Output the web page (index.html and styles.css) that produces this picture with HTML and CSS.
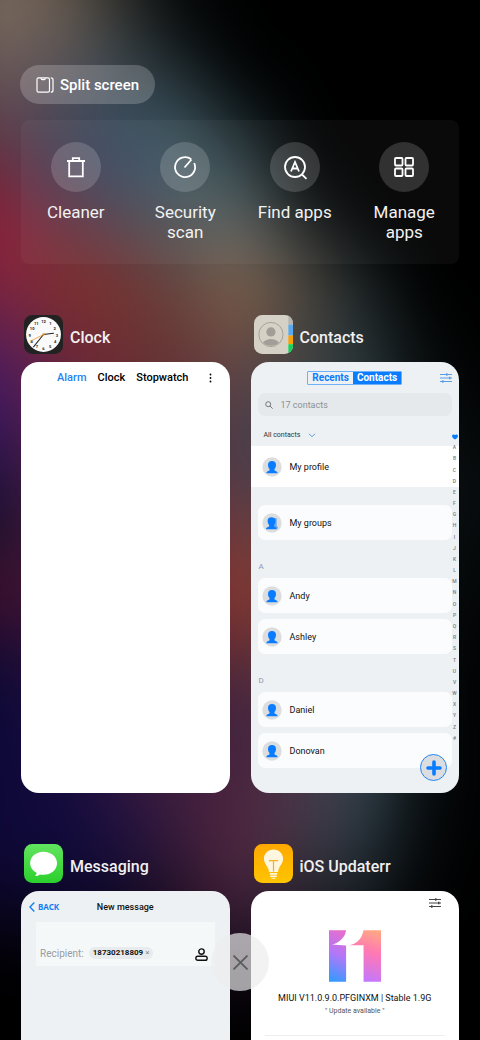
FILE: index.html
```html
<!DOCTYPE html>
<html lang="en">
<head>
<meta charset="utf-8">
<meta name="viewport" content="width=device-width, initial-scale=1">
<title>Recent apps</title>
<link rel="stylesheet" href="styles.css">
</head>
<body>
<svg class="defs" aria-hidden="true">
  <symbol id="person" viewBox="0 0 20 20">
    <circle cx="10" cy="10" r="9.7" fill="#dcdddf"/>
    <path d="M10 4c2.600 0 4 1.400 4 3.700 0 1.900-.6 3.300-1.500 4.200v1.300c.3 1 3.100.8 3.100 3.100H4.400c0-2.300 2.800-2.100 3.100-3.100v-1.300C6.600 11 6 9.600 6 7.700 6 5.400 7.400 4 10 4z" fill="#0a7cff"/>
  </symbol>
  <symbol id="people" viewBox="0 0 20 20">
    <circle cx="10" cy="10" r="9.7" fill="#dcdddf"/>
    <path d="M11 5h3.700v7c0 1.500 1.300 1.500 1.300 3.500h-5z" fill="#6aa9ee"/>
    <path d="M9.500 4.300c2.600 0 4 1.300 4 3.500 0 1.900-.6 3.300-1.500 4.200v1.200c.3 1 2.900.8 2.900 3.100H4c0-2.300 2.800-2.100 3.100-3.100V12c-.9-.9-1.500-2.300-1.500-4.200 0-2.200 1.300-3.500 3.900-3.500z" fill="#0a7cff"/>
  </symbol>
  <symbol id="sliders" viewBox="0 0 12 10">
    <path d="M0 1.500h12M0 5h12M0 8.500h12" fill="none" stroke="currentColor" stroke-width="1"/>
    <path d="M6 .3h1.500v2.400H6zM9 3.800h1.500v2.400H9zM2 7.300h1.500v2.400H2z" fill="currentColor"/>
  </symbol>
</svg>
<div class="screen">
  <div class="wallpaper" aria-hidden="true">
    <i class="band band-1"></i><i class="band band-2"></i><i class="band band-3"></i>
    <i class="band band-4"></i><i class="band band-5"></i><i class="band band-6"></i>
    <i class="band band-7"></i><i class="band band-8"></i><i class="band band-9"></i>
  </div>

  <main class="content">
    <button class="split" type="button">
      <svg class="split-icon" viewBox="0 0 18 16" fill="none" stroke="currentColor" stroke-width="1.200">
        <rect x="1" y=".8" width="12.500" height="14.400" rx="1.600"/>
        <path d="M5 1.200c.2 1.200.6 1.400 1.200 1.400h2c.7 0 1-.2 1.200-1.400M14.800.8c1.500 0 2.200.6 2.200 2v10.400c0 1.400-.7 2-2.200 2"/>
      </svg>
      Split screen
    </button>

    <nav class="tools">
      <button class="tool" type="button">
        <span class="tool-disc"><svg class="tool-icon" viewBox="0 0 24 24"><path d="M3 6h18M5.200 6v15.300h13.600V6M8.800 6V3.200h6.400V6"/></svg></span>
        Cleaner
      </button>
      <button class="tool" type="button">
        <span class="tool-disc"><svg class="tool-icon" viewBox="0 0 24 24"><path d="M18.200 4.200A10 10 0 1 0 21.200 8M11.500 12.500l7-8"/></svg></span>
        Security scan
      </button>
      <button class="tool" type="button">
        <span class="tool-disc"><svg class="tool-icon" viewBox="0 0 24 24"><circle cx="12" cy="12" r="10"/><path d="M19 19.500l4.500 4.300M8 16.500l4-9.500 4 9.500M9.500 13.500h5"/></svg></span>
        Find apps
      </button>
      <button class="tool" type="button">
        <span class="tool-disc"><svg class="tool-icon" viewBox="0 0 24 24"><rect x="3" y="3" width="7.500" height="7.500" rx="1"/><rect x="13.500" y="3" width="7.500" height="7.500" rx="1"/><rect x="3" y="13.500" width="7.500" height="7.500" rx="1"/><rect x="13.500" y="13.500" width="7.500" height="7.500" rx="1"/></svg></span>
        Manage apps
      </button>
    </nav>

    <div class="tasks">
      <section class="task">
        <h2 class="task-title">
          <svg class="app-icon" viewBox="0 0 38 38">
            <rect width="38" height="38" rx="8" fill="#222"/>
            <circle cx="19" cy="19" r="17" fill="#fafafa"/>
            <g class="dial"><text x="19" y="8">12</text><text x="25.800" y="10">1</text><text x="30" y="15">2</text><text x="32.200" y="21">3</text><text x="30.500" y="27.500">4</text><text x="25.500" y="32">5</text><text x="19" y="34.500">6</text><text x="12.500" y="32">7</text><text x="7.500" y="27.500">8</text><text x="5.600" y="21">9</text><text x="8" y="15">10</text><text x="12" y="10">11</text></g>
            <path d="M19 19l9.700-1.300M19 19L9.300 31" stroke="#222" stroke-width="1" stroke-linecap="round"/>
            <path d="M21 18L6 25.700" stroke="#f39a2d" stroke-width=".8"/>
            <circle cx="19" cy="19" r="1.100" fill="#e08a20"/>
          </svg>
          <span class="task-name">Clock</span>
        </h2>
        <article class="card clock">
          <header class="clock-bar">
            <button class="clock-tab active" type="button">Alarm</button>
            <button class="clock-tab" type="button">Clock</button>
            <button class="clock-tab" type="button">Stopwatch</button>
            <button class="more" type="button" aria-label="More"><svg class="more-icon" viewBox="0 0 3 10"><circle cx="1.500" cy="1.500" r=".9"/><circle cx="1.500" cy="5" r=".9"/><circle cx="1.500" cy="8.500" r=".9"/></svg></button>
          </header>
        </article>
      </section>

      <section class="task">
        <h2 class="task-title">
          <svg class="app-icon" viewBox="0 0 38 38">
            <defs><clipPath id="tile"><rect width="38" height="38" rx="8"/></clipPath><clipPath id="face"><circle cx="16.500" cy="19" r="11"/></clipPath></defs>
            <g clip-path="url(#tile)">
              <rect width="38" height="38" fill="#d6d1c6"/>
              <path d="M33.500 0H38v9.500h-4.500z" fill="#b5b5b0"/><path d="M33.500 9.500H38v10.500h-4.500z" fill="#58aaf0"/><path d="M33.500 20H38v8.500h-4.500z" fill="#f9a208"/><path d="M33.500 28.500H38V38h-4.500z" fill="#12d65c"/>
              <g clip-path="url(#face)"><circle cx="16.500" cy="16.500" r="4.500" fill="#a39d97"/><ellipse cx="16.500" cy="29" rx="8.500" ry="5.500" fill="#a39d97"/></g>
              <circle cx="16.500" cy="19" r="11.800" fill="none" stroke="#a39d97" stroke-width=".9"/>
            </g>
          </svg>
          <span class="task-name">Contacts</span>
        </h2>
        <article class="card contacts">
          <header class="contacts-bar">
            <div class="segments"><button class="segment" type="button">Recents</button><button class="segment on" type="button">Contacts</button></div>
            <button class="filter" type="button" aria-label="Filter"><svg class="sliders"><use href="#sliders"/></svg></button>
          </header>
          <label class="search">
            <svg class="search-icon" viewBox="0 0 8 8" fill="none" stroke="currentColor"><circle cx="3.200" cy="3.200" r="2.500"/><path d="M5 5l2.600 2.600"/></svg>
            <input class="search-input" type="text" placeholder="17 contacts" aria-label="Search contacts">
          </label>
          <button class="group-picker" type="button">All contacts <svg class="chevron" viewBox="0 0 8 5" fill="none" stroke="currentColor"><path d="M1 .8l3 3 3-3"/></svg></button>
          <a class="row profile" href="#profile"><svg class="avatar"><use href="#person"/></svg>My profile</a>
          <a class="row" href="#groups"><svg class="avatar"><use href="#people"/></svg>My groups</a>
          <h3 class="initial">A</h3>
          <div class="rows">
            <a class="row" href="#andy"><svg class="avatar"><use href="#person"/></svg>Andy</a>
            <a class="row" href="#ashley"><svg class="avatar"><use href="#person"/></svg>Ashley</a>
          </div>
          <h3 class="initial">D</h3>
          <div class="rows">
            <a class="row" href="#daniel"><svg class="avatar"><use href="#person"/></svg>Daniel</a>
            <a class="row" href="#donovan"><svg class="avatar"><use href="#person"/></svg>Donovan</a>
          </div>
          <div class="index">
            <span class="mark"><svg class="heart" viewBox="0 0 6 6"><path d="M3 5.600C1.500 4.500 0 3.600 0 2 0 .4 2 0 3 1 4 0 6 .4 6 2c0 1.600-1.500 2.500-3 3.600z"/></svg></span>
            <span class="mark">A</span><span class="mark">B</span><span class="mark">C</span><span class="mark">D</span><span class="mark">E</span><span class="mark">F</span><span class="mark">G</span><span class="mark">H</span><span class="mark">I</span><span class="mark">J</span><span class="mark">K</span><span class="mark">L</span><span class="mark">M</span><span class="mark">N</span><span class="mark">O</span><span class="mark">P</span><span class="mark">Q</span><span class="mark">R</span><span class="mark">S</span><span class="mark">T</span><span class="mark">U</span><span class="mark">V</span><span class="mark">W</span><span class="mark">X</span><span class="mark">Y</span><span class="mark">Z</span><span class="mark">#</span>
          </div>
          <button class="add" type="button" aria-label="Add contact"><svg class="add-icon" viewBox="0 0 16 16"><path d="M8 2v12M2 8h12" stroke="currentColor" stroke-width="3.600" stroke-linecap="round"/></svg></button>
        </article>
      </section>

      <section class="task">
        <h2 class="task-title">
          <svg class="app-icon" viewBox="0 0 38 38">
            <defs><linearGradient id="green" x2="0" y2="1"><stop stop-color="#62e45f"/><stop offset="1" stop-color="#2bd02d"/></linearGradient></defs>
            <rect width="38" height="38" rx="8" fill="url(#green)"/>
            <path d="M19 7.500c7.500 0 13.200 5 13.200 11.200S26.500 30 19 30c-1.200 0-2.400-.1-3.500-.4-1.300 1-3 1.600-5 1.700 1-.8 1.700-1.800 1.800-3.200C8.500 26.100 6 22.700 6 18.700 6 12.500 11.500 7.500 19 7.500z" fill="#fff"/>
          </svg>
          <span class="task-name">Messaging</span>
        </h2>
        <article class="card messaging">
          <header class="message-bar">
            <button class="back" type="button"><svg class="back-icon" viewBox="0 0 6 10" fill="none" stroke="currentColor" stroke-width="1.400"><path d="M5.300.6L1 5l4.300 4.400"/></svg>BACK</button>
            <h3 class="message-title">New message</h3>
          </header>
          <div class="recipient">
            <span class="recipient-label">Recipient:</span>
            <button class="chip" type="button">18730218809 <span class="chip-x">×</span></button>
            <button class="pick" type="button" aria-label="Choose contact"><svg class="pick-icon" viewBox="0 0 12 12" fill="none" stroke="currentColor" stroke-width="1.300"><circle cx="6" cy="3.300" r="2.500"/><rect x=".8" y="7.600" width="10.400" height="3.700" rx="1.700"/></svg></button>
          </div>
        </article>
      </section>

      <section class="task">
        <h2 class="task-title">
          <svg class="app-icon" viewBox="0 0 38 38">
            <defs><linearGradient id="amber" x2="0" y2="1"><stop stop-color="#ffa800"/><stop offset="1" stop-color="#ffc400"/></linearGradient></defs>
            <rect width="38" height="38" rx="8" fill="url(#amber)"/>
            <path d="M19 5.300c5.300 0 9.300 4 9.300 9 0 4.500-2.900 6.500-4.100 9.500-.5 1.300-.6 2.300-.8 3.400h-8.800c-.2-1.100-.3-2.100-.8-3.400-1.200-3-4.100-5-4.100-9.500 0-5 4-9 9.300-9z" fill="#fff6e0"/>
            <path d="M15.500 28.300h7v1.600h-7zM15.800 30.700h6.400v1.500h-6.400zM17 32.900h4v1h-4z" fill="#fff6e0"/>
            <path d="M14.500 16.200h9M19 16.200v10.500" stroke="#f5b21c" stroke-width="1.200"/>
          </svg>
          <span class="task-name">iOS Updaterr</span>
        </h2>
        <article class="card updater">
          <button class="settings" type="button" aria-label="Settings"><svg class="sliders"><use href="#sliders"/></svg></button>
          <svg class="logo" viewBox="0 0 155 154">
            <defs>
              <linearGradient id="one" gradientUnits="userSpaceOnUse" x1="0" y1="154" x2="70" y2="0"><stop stop-color="#2a9dff"/><stop offset=".5" stop-color="#b277f8"/><stop offset="1" stop-color="#f06cc4"/></linearGradient>
              <linearGradient id="two" gradientUnits="userSpaceOnUse" x1="110" y1="154" x2="155" y2="0"><stop stop-color="#c277ff"/><stop offset=".55" stop-color="#ff78b4"/><stop offset="1" stop-color="#ffac80"/></linearGradient>
            </defs>
            <path d="M0 0h51C48 22 30 38 8 43l43 3v108H0z" fill="url(#one)"/>
            <path d="M103 0h52v154h-52V45H58C83 41 98 26 103 0z" fill="url(#two)"/>
          </svg>
          <p class="version">MIUI V11.0.9.0.PFGINXM | Stable 1.9G</p>
          <p class="update">" Update available "</p>
          <hr class="rule">
        </article>
      </section>
    </div>
  </main>

  <button class="close" type="button" aria-label="Close all"><svg class="close-icon" viewBox="0 0 14 14"><path d="M1 1l12 12M13 1L1 13" stroke="currentColor" stroke-width="1.800" stroke-linecap="round"/></svg></button>
</div>
</body>
</html>
```
FILE: styles.css
```css
* { box-sizing: border-box; }
body { margin: 0; background: #000; font-family: Roboto, "Noto Sans", sans-serif; }
button { margin: 0; padding: 0; border: 0; background: none; color: inherit; font: inherit; cursor: pointer; }
h2, h3, p { margin: 0; font-weight: 500; }
svg { display: block; flex: none; }
.defs { position: absolute; width: 0; height: 0; }

.screen { position: relative; height: 100vh; overflow: hidden; background: #000; }

/* Wallpaper: vertical colour bands melted together */
.wallpaper {
  position: absolute; inset: -60px;
  display: grid; grid-template-columns: 90px repeat(7, 1fr) 90px;
  filter: blur(32px);
}
.band-1 { background: linear-gradient(#7a6a5e 60px, #6e5c58 120px, #5c4350 180px, #702a3c 230px, #94203c 290px, #7c2540 350px, #561e5c 410px, #401868 460px, #241248 530px, #14102c 580px, #48102c 655px, #140a30 710px, #0a083a 770px, #100838 910px, #08051c 980px, #000 1010px); }
.band-2 { background: linear-gradient(#6a5c50 60px, #5e585a 120px, #4a4858 170px, #40455c 210px, #5c3c50 260px, #7a2e38 300px, #80302c 350px, #6c2638 410px, #0f0a3c 860px, #100a3c 910px, #0a0620 990px, #000 1040px); }
.band-3 { background: linear-gradient(#2c2c28 60px, #3c484e 120px, #384a5a 170px, #364c64 220px, #444a5c 260px, #5e3c44 300px, #7a3430 340px, #703032 390px, #2a1440 850px, #1a0f3c 910px, #000 1040px); }
.band-4 { background: linear-gradient(#040608 60px, #0e1618 110px, #304046 155px, #425a64 200px, #445e66 240px, #4c585c 280px, #5e4e48 320px, #63403a 370px, #643434 420px, #401f3e 850px, #361a38 910px, #000 1050px); }
.band-5 { background: linear-gradient(#000 120px, #0a1214 165px, #203036 200px, #3a4e54 240px, #5e6664 280px, #7a6452 330px, #7e5a46 370px, #604848 430px, #4a4050 490px, #443c4c 520px, #64404a 560px, #803c38 600px, #a23a28 655px, #6c2c30 710px, #40223e 760px, #46203e 810px, #552840 900px, #40203c 970px, #0a0510 1050px, #000 1080px); }
.band-6 { background: linear-gradient(#000 190px, #04080a 240px, #1e2426 285px, #4a4842 325px, #52483e 360px, #404444 410px, #4a3646 850px, #3e3644 910px, #000 1040px); }
.band-7 { background: linear-gradient(#000 280px, #04080a 300px, #1a2224 340px, #263236 380px, #2a363a 410px, #374852 850px, #26343c 910px, #000 1030px); }
.band-8 { background: linear-gradient(#000 360px, #060a0a 400px, #0a1012 430px, #080e10 850px, #040608 920px, #000 990px); }
.band-9 { background: linear-gradient(#000 430px, #080c0e 550px, #000 720px); }

.content { position: relative; padding: 65px 21px 0; }

.split {
  display: flex; align-items: center; gap: 6px;
  height: 39px; padding: 0 16px; margin-left: -1px;
  border-radius: 20px; background: rgba(255, 255, 255, .2);
  color: #fff; font-size: 15px; font-weight: 500;
}
.split-icon { width: 18px; height: 16px; }

.tools {
  display: grid; grid-template-columns: repeat(4, 1fr);
  min-height: 144px; margin-top: 16px; padding-top: 22px;
  border-radius: 8px; background: rgba(255, 255, 255, .04);
}
.tool {
  display: flex; flex-direction: column; align-items: center; gap: 10px;
  padding: 0 16px; color: #f2f2f2; font-size: 17px; line-height: 20px;
}
.tool-disc {
  display: grid; place-items: center; width: 50px; height: 50px;
  border-radius: 50%; background: rgba(255, 255, 255, .16);
}
.tool-icon { width: 24px; height: 24px; overflow: visible; fill: none; stroke: #fff; stroke-width: 1.8; }

.tasks {
  display: grid; grid-template-columns: 1fr 1fr;
  column-gap: 21px; row-gap: 51px; margin-top: 51px;
}
.task-title {
  display: flex; align-items: center; gap: 7px;
  height: 39px; margin: 0 0 8px 3px;
  color: #f1eff0; font-size: 16px; line-height: 20px;
}
.task-name { padding-top: 6px; }
.app-icon { width: 39px; height: 39px; }
.dial { font: bold 4px Roboto, sans-serif; text-anchor: middle; fill: #222; }

.card { position: relative; height: 431px; overflow: hidden; border-radius: 18px; background: #fff; color: #111; }

.clock-bar { display: flex; align-items: center; gap: 11px; height: 31px; padding: 0 18px 0 36px; font-size: 11px; font-weight: 500; color: #000; }
.active { color: #2583f5; }
.more { margin-left: auto; }
.more-icon { width: 3px; height: 10px; }

.contacts, .messaging { background: #edf1f4; }
.contacts { padding: 0 7px; }
.contacts-bar { display: grid; grid-template-columns: 1fr auto 1fr; align-items: center; height: 31px; }
.segments { grid-column: 2; display: flex; border: 1px solid #6fb2fa; border-radius: 1px; color: #0a7cff; font-size: 10px; line-height: 12px; font-weight: 700; }
.segment { padding: 0 4px; }
.segment.on { background: #0a7cff; color: #fff; }
.filter { justify-self: end; color: #5a9fe6; }
.sliders { width: 12px; height: 10px; }
.search { display: flex; align-items: center; gap: 8px; height: 23px; padding: 0 7px; border-radius: 7px; background: #e5e9ec; color: #777; }
.search-icon { width: 8px; height: 8px; }
.search-input { flex: 1; min-width: 0; padding: 0; border: 0; outline: 0; background: none; font: 9px Roboto, sans-serif; color: #333; }
.search-input::placeholder { color: #8c9093; }
.group-picker { display: flex; align-items: center; gap: 8px; height: 30px; padding: 8px 6px 0; color: #333; font-size: 7px; }
.chevron { width: 8px; height: 5px; color: #5a94d8; }
.row { display: flex; align-items: center; gap: 8px; height: 35px; padding: 0 4px; border-radius: 7px; background: #fbfcfe; color: #111; font-size: 9px; text-decoration: none; }
.profile { height: 41px; margin: 0 -7px 18px; padding: 0 11px; border-radius: 0; background: #fff; }
.avatar { width: 20px; height: 20px; }
.initial { height: 38px; padding: 19px 1px 0; color: #8d96ad; font-size: 8px; line-height: 16px; font-weight: 400; }
.rows { display: grid; gap: 6px; }
.index { position: absolute; inset: 69px 1px 49px auto; display: flex; flex-direction: column; width: 7px; color: #777b80; font-size: 5px; font-weight: 500; line-height: 1; }
.mark { flex: 1; display: grid; place-items: center; }
.heart { width: 6px; height: 6px; fill: #0a7cff; }
.add { position: absolute; right: 12px; bottom: 12px; display: grid; place-items: center; width: 27px; height: 27px; border: 1px solid #2486f5; border-radius: 50%; background: #dcdde0; color: #0a7cff; }
.add-icon { width: 16px; height: 16px; }

.message-bar { display: grid; grid-template-columns: 1fr auto 1fr; align-items: center; height: 31px; padding: 0 8px; }
.back { display: flex; align-items: center; gap: 3px; justify-self: start; color: #1580f5; font: 700 8px "Noto Sans", sans-serif; }
.back-icon { width: 6px; height: 10px; }
.message-title { font-size: 9px; }
.recipient { display: flex; align-items: flex-end; gap: 5px; height: 44px; margin: 0 15px; padding: 0 7px 5px 4px; background: #f4f8f9; font-size: 10px; line-height: 14px; }
.recipient-label { color: #999da0; }
.chip { padding: 0 4px; border-radius: 6px; background: #e8ebed; font-size: 8px; font-weight: 700; line-height: 12px; margin-bottom: 2px; }
.chip-x { color: #888; font-weight: 400; }
.pick { margin-left: auto; }
.pick-icon { width: 13px; height: 13px; }

.updater { display: flex; flex-direction: column; align-items: center; padding: 7px 14px; }
.settings { align-self: flex-end; margin-right: 4px; color: #444; }
.logo { width: 52px; height: 52px; margin-top: 22px; }
.version { margin-top: 9px; font-size: 9px; line-height: 14px; font-weight: 400; white-space: nowrap; }
.update { color: #555; font-size: 7px; line-height: 12px; font-weight: 400; }
.rule { width: 100%; margin: 18px 0 0; border: 0; border-top: 1px solid #eee; }

.close {
  position: absolute; bottom: 49px; left: 50%; transform: translateX(-50%);
  display: grid; place-items: center; width: 58px; height: 58px;
  border-radius: 50%; background: rgba(236, 236, 238, .68); color: #5c5c5e;
}
.close-icon { width: 15px; height: 15px; }
```
